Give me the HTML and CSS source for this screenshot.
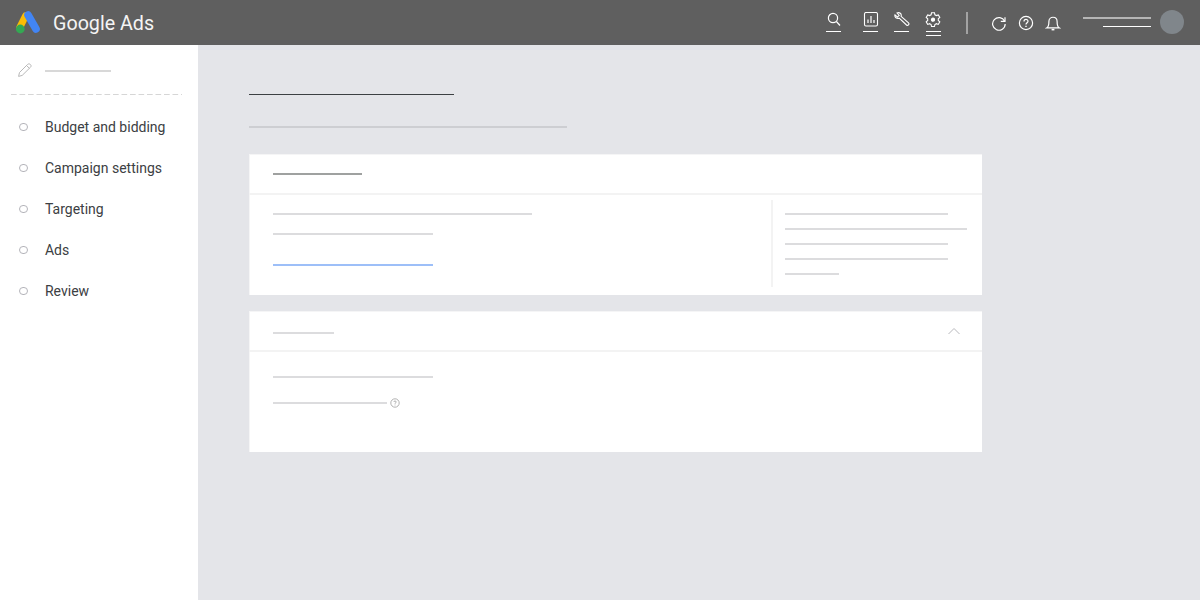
FILE: index.html
```html
<!DOCTYPE html>
<html lang="en">
<head>
<meta charset="utf-8">
<title>Google Ads</title>
<link rel="stylesheet" href="styles.css">
</head>
<body>
<header class="topbar">
  <svg class="logo" width="26" height="24" viewBox="0 0 26 24">
    <path d="M10.5 6 L5 17" stroke="#fbbc04" stroke-width="7" stroke-linecap="round" fill="none"/>
    <path d="M13 5 L21 19" stroke="#4285f4" stroke-width="7.6" stroke-linecap="round" fill="none"/>
    <circle cx="5.3" cy="19" r="4.4" fill="#34a853"/>
  </svg>
  <span class="brand">Google Ads</span>
  <div class="tools">
    <div class="tool tool-search">
      <svg width="16" height="16" viewBox="0 0 16 16" fill="none" stroke="#fff" stroke-width="1.2"><circle cx="7" cy="6" r="4.6"/><path d="M10.4 9.5 L14 13.5"/></svg>
      <i class="tool-line"></i>
    </div>
    <div class="tool">
      <svg width="16" height="16" viewBox="0 0 16 16" fill="none" stroke="#fff"><rect x="1.5" y=".5" width="13" height="13.5" rx="1.5" stroke-width="1.1"/><path d="M5 11V7.5M8 11V4M11 11V8" stroke-width="1.2"/></svg>
      <i class="tool-line"></i>
    </div>
    <div class="tool">
      <svg width="16" height="16" viewBox="0 0 16 16" fill="none" stroke="#fff" stroke-width="1.1"><path d="M1 2.8 L3.4 5 L5.2 3.4 L3 1 C5.4 -.2 7.9 1.8 7.1 4.3 L14.5 10.8 C15.8 12.2 13.9 14.2 12.5 13 L5.2 6.2 C2.8 7 .2 5.2 1 2.8 Z"/></svg>
      <i class="tool-line"></i>
    </div>
    <div class="tool tool-gear">
      <svg width="16" height="16" viewBox="0 0 16 16" fill="none" stroke="#fff" stroke-width="1.1"><path d="M6.5 .8h3l.4 2 1.5.8 1.9-.7 1.5 2.6-1.5 1.3v1.7l1.5 1.3-1.5 2.6-1.9-.7-1.5.8-.4 2h-3l-.4-2-1.5-.8-1.9.7L1.2 9.8l1.5-1.3V6.8L1.2 5.5l1.5-2.6 1.9.7 1.5-.8z"/><circle cx="8" cy="7.7" r="1.6" fill="#fff"/></svg>
      <i class="tool-line"></i>
      <i class="tool-line"></i>
    </div>
  </div>
  <i class="bar-divider"></i>
  <div class="actions">
    <svg width="16" height="16" viewBox="0 0 16 16" fill="none" stroke="#fff" stroke-width="1.2"><path d="M13.6 6.2 A6.3 6.3 0 1 0 14.2 9"/><path d="M14 2.2 V6.4 H9.8"/></svg>
    <svg width="16" height="16" viewBox="0 0 16 16" fill="none" stroke="#fff" stroke-width="1.2"><circle cx="8" cy="8" r="6.6"/><path d="M6 6.4 C6 3.8 10 3.8 10 6.2 C10 7.8 8 7.8 8 9.6"/><path d="M8 10.8 V12" stroke-width="1.4"/></svg>
    <svg width="16" height="16" viewBox="0 0 16 16" fill="none" stroke="#fff" stroke-width="1.2"><path d="M2 12.8 C3.9 11.6 3.9 9.4 3.9 6.6 C3.9 .8 12.1 .8 12.1 6.6 C12.1 9.4 12.1 11.6 14 12.8 Z"/><path d="M6.6 14.6 H9.4" stroke-width="1.6"/></svg>
  </div>
  <div class="account">
    <i class="account-name"></i>
    <i class="account-id"></i>
  </div>
  <i class="avatar"></i>
</header>
<div class="page">
  <aside class="sidebar">
    <div class="draft">
      <svg width="16" height="16" viewBox="0 0 16 16" fill="none" stroke="#b8b8b8" stroke-width="1"><path d="M2.5 10.5 L10.5 2.5 C11.3 1.7 12.4 1.6 13.4 2.5 C14.3 3.4 14.3 4.4 13.5 5.2 L5.2 13.4 L1.6 14.4 Z"/><path d="M9.5 3.5 L12.4 6.3"/></svg>
      <i class="draft-line"></i>
    </div>
    <ul class="steps">
      <li class="step"><i class="dot"></i>Budget and bidding</li>
      <li class="step"><i class="dot"></i>Campaign settings</li>
      <li class="step"><i class="dot"></i>Targeting</li>
      <li class="step"><i class="dot"></i>Ads</li>
      <li class="step"><i class="dot"></i>Review</li>
    </ul>
  </aside>
  <main class="content">
    <i class="title-line"></i>
    <i class="subtitle-line"></i>
    <section class="card">
      <div class="card-head"><i class="line head-line"></i></div>
      <div class="card-body split">
        <div class="col-main">
          <i class="line w259"></i>
          <i class="line w160 mt18"></i>
          <i class="line w160 link mt29"></i>
        </div>
        <div class="col-side">
          <i class="line side w163"></i>
          <i class="line side w182"></i>
          <i class="line side w163"></i>
          <i class="line side w163"></i>
          <i class="line side w54"></i>
        </div>
      </div>
    </section>
    <section class="card">
      <div class="card-head spread">
        <i class="line w61"></i>
        <svg class="chevron" width="12" height="8" viewBox="0 0 12 8" fill="none" stroke="#b8b8bc" stroke-width="1"><path d="M.5 7 L6 1.5 L11.5 7"/></svg>
      </div>
      <div class="card-body stack">
        <i class="line w160"></i>
        <div class="with-help">
          <i class="line w114"></i>
          <svg width="10" height="10" viewBox="0 0 10 10" fill="none" stroke="#9e9e9e" stroke-width=".8"><circle cx="5" cy="5" r="4.2"/><path d="M3.8 4 C3.8 2.6 6.2 2.6 6.2 4 C6.2 4.9 5 4.9 5 5.8 M5 6.6 V7.4"/></svg>
        </div>
      </div>
    </section>
  </main>
</div>
</body>
</html>
```
FILE: styles.css
```css
* { box-sizing: border-box; }
html, body { margin: 0; height: 100%; overflow: hidden; }
body { font-family: Roboto, "Liberation Sans", sans-serif; background: #e4e5e9; }
i { display: block; }

.topbar { height: 45px; background: #5f5f5f; display: flex; align-items: center; padding-left: 15px; }
.logo { margin-top: -1px; flex: none; }
.brand { margin: 1px 0 0 12px; font-family: Roboto, sans-serif; font-size: 19.7px; color: #f4f4f4; }
.tools { margin-left: auto; display: flex; gap: 15px; align-self: flex-start; padding-top: 12px; }
.tool { width: 16px; }
.tool svg { display: block; }
.tool-search { margin-right: 6px; }
.tool-gear { margin-left: 1px; }
.tool-gear svg { margin-left: -1px; }
.tool-line { height: 1px; background: #fff; margin-top: 3px; width: 15px; }
.bar-divider { width: 2px; height: 22px; background: #a3a3a3; margin-left: 24px; }
.actions { display: flex; gap: 11px; margin-left: 23px; }
.actions svg { display: block; }
.account { width: 68px; margin-left: 22px; align-self: flex-start; padding-top: 17px; }
.account-name { height: 2px; background: #b5b5b5; }
.account-id { height: 1px; width: 48px; background: #fff; margin: 7px 0 0 20px; }
.avatar { width: 24px; height: 24px; border-radius: 50%; background: #80868b; margin: -1px 16px 0 9px; }

.page { display: flex; height: 555px; }
.sidebar { width: 198px; background: #fff; padding: 0 16px 0 11px; flex: none; }
.draft { height: 50px; background: linear-gradient(90deg, #d6d6d6 5.5px, transparent 5.5px) 0 100% / 8.5px 1px repeat-x; display: flex; align-items: center; gap: 12px; padding-left: 6px; width: 171px; }
.draft svg { margin-top: -1px; }
.draft-line { width: 66px; height: 2px; background: #d8d8d8; margin-top: 1px; }
.steps { list-style: none; margin: 0; padding: 11px 0 0; }
.step { height: 41px; display: flex; align-items: center; font-size: 14px; color: #3c4043; }
.dot { width: 8.5px; height: 8.5px; border: 1px solid #b4b4ba; border-radius: 50%; margin: 1px 17.2px 0 8.3px; flex: none; }

.content { flex: 1; padding: 49px 0 0 51px; }
.title-line { width: 205px; height: 1px; background: #3c4043; }
.subtitle-line { width: 318px; height: 2px; background: #cdced2; margin: 31px 0 26px; }
.card { width: 733px; height: 141px; background: #fff; margin-bottom: 16px; box-shadow: inset 1px 1px 0 #f5f5f6; }
.card-head { height: 41px; border-bottom: 2px solid #f3f3f3; padding: 19px 22px 0 24px; }
.spread { display: flex; justify-content: space-between; align-items: flex-start; padding-top: 21px; }
.chevron { margin-top: -5px; }
.line { height: 2px; background: #dcdcde; }
.head-line { width: 89px; background: #9fa1a0; }
.link { background: #9dbff8; }
.w259 { width: 259px; } .w182 { width: 182px; } .w163 { width: 163px; }
.w160 { width: 160px; } .w114 { width: 114px; } .w61 { width: 61px; } .w54 { width: 54px; }
.mt18 { margin-top: 18px; } .mt29 { margin-top: 29px; }
.card-body { padding-left: 24px; }
.split { display: flex; padding-top: 5px; }
.col-main { width: 498px; padding-top: 13px; }
.col-side { width: 196px; height: 87px; border-left: 2px solid #f3f3f3; padding: 13px 0 0 12px; }
.side + .side { margin-top: 13px; }
.stack { padding-top: 24px; }
.with-help { display: flex; align-items: center; gap: 3px; margin-top: 20px; }
```
